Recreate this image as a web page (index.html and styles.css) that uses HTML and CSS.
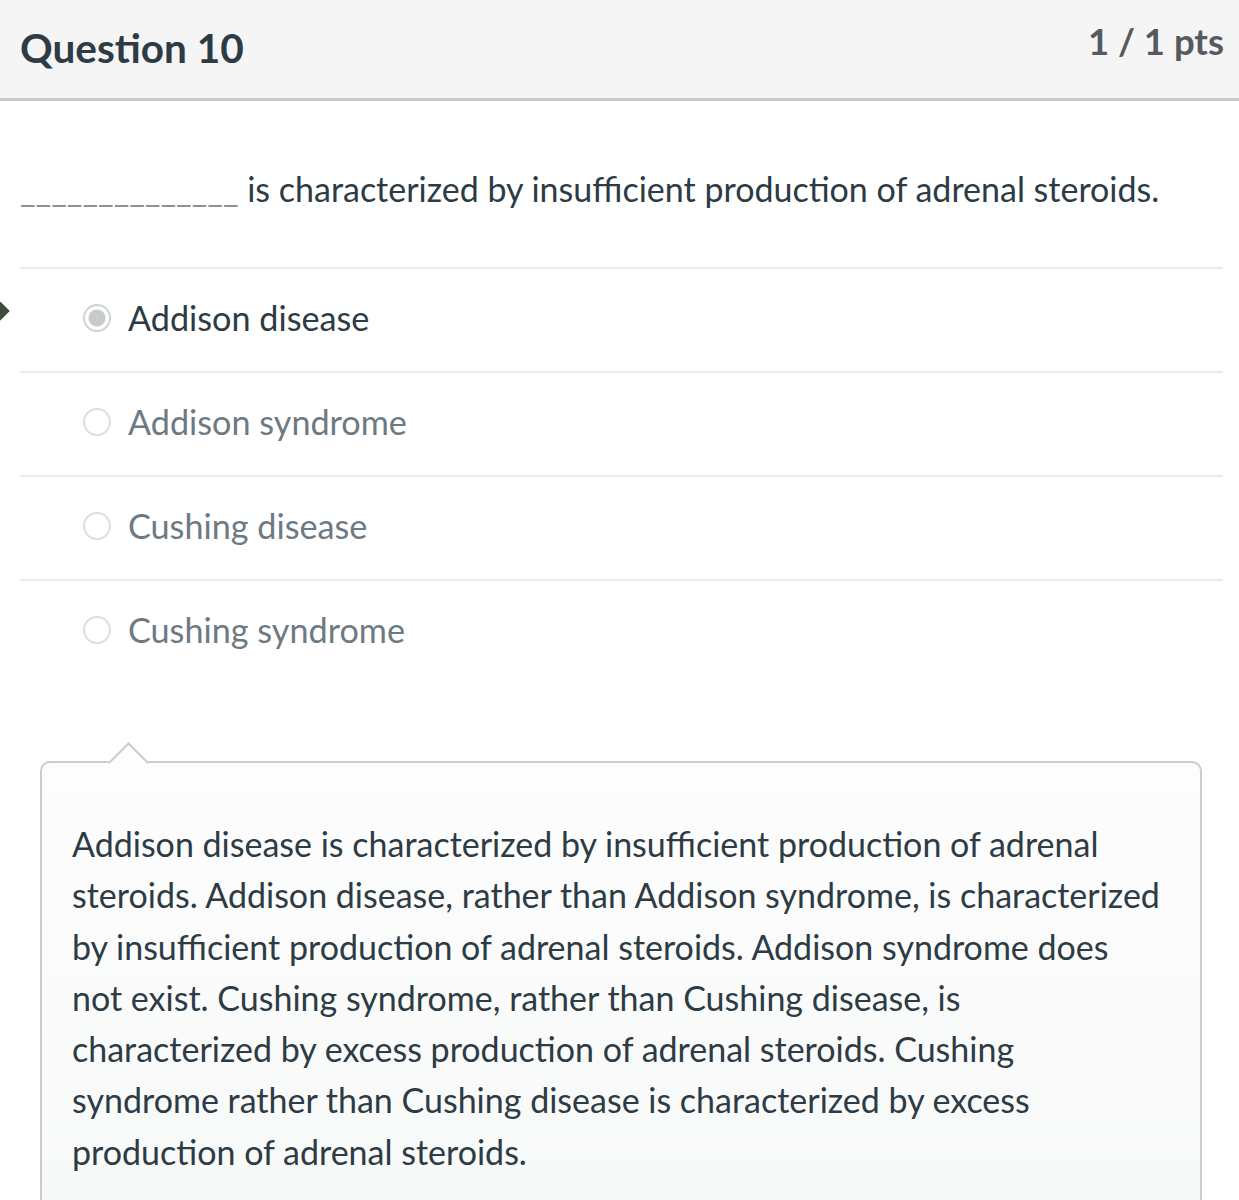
FILE: index.html
```html
<!DOCTYPE html>
<html lang="en">
<head>
    <meta charset="UTF-8">
    <meta name="viewport" content="width=device-width, initial-scale=1.0">
    <title>Question 10</title>
    <link rel="stylesheet" href="styles.css">
</head>
<body>
    <div class="question">
        <div class="header">
            <h2 class="title">Question 10</h2>
            <span class="points">1 / 1 pts</span>
        </div>
        <div class="content">
            <p class="text"><span class="blank">______________</span> is characterized by insufficient production of adrenal steroids.</p>
            <div class="answers">
                <div class="answer selected">
                    <span class="marker"></span>
                    <span class="radio"></span>
                    <span class="label">Addison disease</span>
                </div>
                <div class="answer">
                    <span class="radio"></span>
                    <span class="label">Addison syndrome</span>
                </div>
                <div class="answer">
                    <span class="radio"></span>
                    <span class="label">Cushing disease</span>
                </div>
                <div class="answer">
                    <span class="radio"></span>
                    <span class="label">Cushing syndrome</span>
                </div>
            </div>
            <div class="comment">
                <p>Addison disease is characterized by insufficient production of adrenal steroids. Addison disease, rather than Addison syndrome, is characterized by insufficient production of adrenal steroids. Addison syndrome does not exist. Cushing syndrome, rather than Cushing disease, is characterized by excess production of adrenal steroids. Cushing syndrome rather than Cushing disease is characterized by excess production of adrenal steroids.</p>
            </div>
        </div>
    </div>
</body>
</html>
```

FILE: styles.css
```css
body {
    font-family: Lato, "Open Sans", sans-serif;
    color: #2d3b45;
    background: #fff;
    margin: 0;
    padding: 0;
}
.header {
    display: flex;
    justify-content: space-between;
    align-items: flex-start;
    height: 98px;
    background: #f5f5f5;
    border-bottom: 3px solid #c9c9c9;
    padding: 0 15px 0 20px;
}
.title {
    margin: 0;
    padding-top: 23px;
    font-size: 40.5px;
    font-weight: 700;
    color: #2d3b45;
}
.points {
    padding-top: 19px;
    font-size: 36.5px;
    font-weight: 700;
    color: #555a5e;
}
.content {
    padding: 0 16px 0 20px;
}
.text {
    margin: 0;
    padding: 68px 0 58px;
    font-size: 34px;
    line-height: 40px;
}
.blank {
    color: #8a9399;
}
.answers {
    border-top: 2px solid #e8eaec;
}
.answer {
    position: relative;
    display: flex;
    align-items: center;
    height: 102px;
    border-bottom: 2px solid #e8eaec;
    padding-left: 63px;
    font-size: 34.2px;
    color: #6d7a83;
}
.answer:last-child {
    border-bottom: none;
}
.answer.selected {
    color: #2d3b45;
}
.radio {
    width: 24px;
    height: 24px;
    border: 2px solid #dcdfe1;
    border-radius: 50%;
    margin-right: 17px;
    background: #fff;
    box-sizing: content-box;
    margin-top: -4px;
}
.selected .radio {
    background: radial-gradient(circle, #c8cbcd 0 8px, #fff 9px);
    border-color: #d0d3d5;
}
.label {
    margin-top: -5px;
}
.marker {
    position: absolute;
    left: -32px;
    top: 33px;
    width: 18px;
    height: 18px;
    background: #3f4b3e;
    transform: rotate(45deg);
}
.comment {
    position: relative;
    margin: 78px 21px 0 20px;
    border: 2px solid #c7cdd1;
    border-bottom: none;
    border-radius: 10px 10px 0 0;
    background: linear-gradient(#fdfdfd, #f7f8f8);
    padding: 55px 38px 80px 30px;
    font-size: 34px;
    line-height: 51.3px;
}
.comment::before {
    content: "";
    position: absolute;
    left: 72px;
    top: -15px;
    width: 27px;
    height: 27px;
    background: #fdfdfd;
    border-top: 2px solid #c7cdd1;
    border-left: 2px solid #c7cdd1;
    transform: rotate(45deg);
}
.comment p {
    margin: 0;
}
```
